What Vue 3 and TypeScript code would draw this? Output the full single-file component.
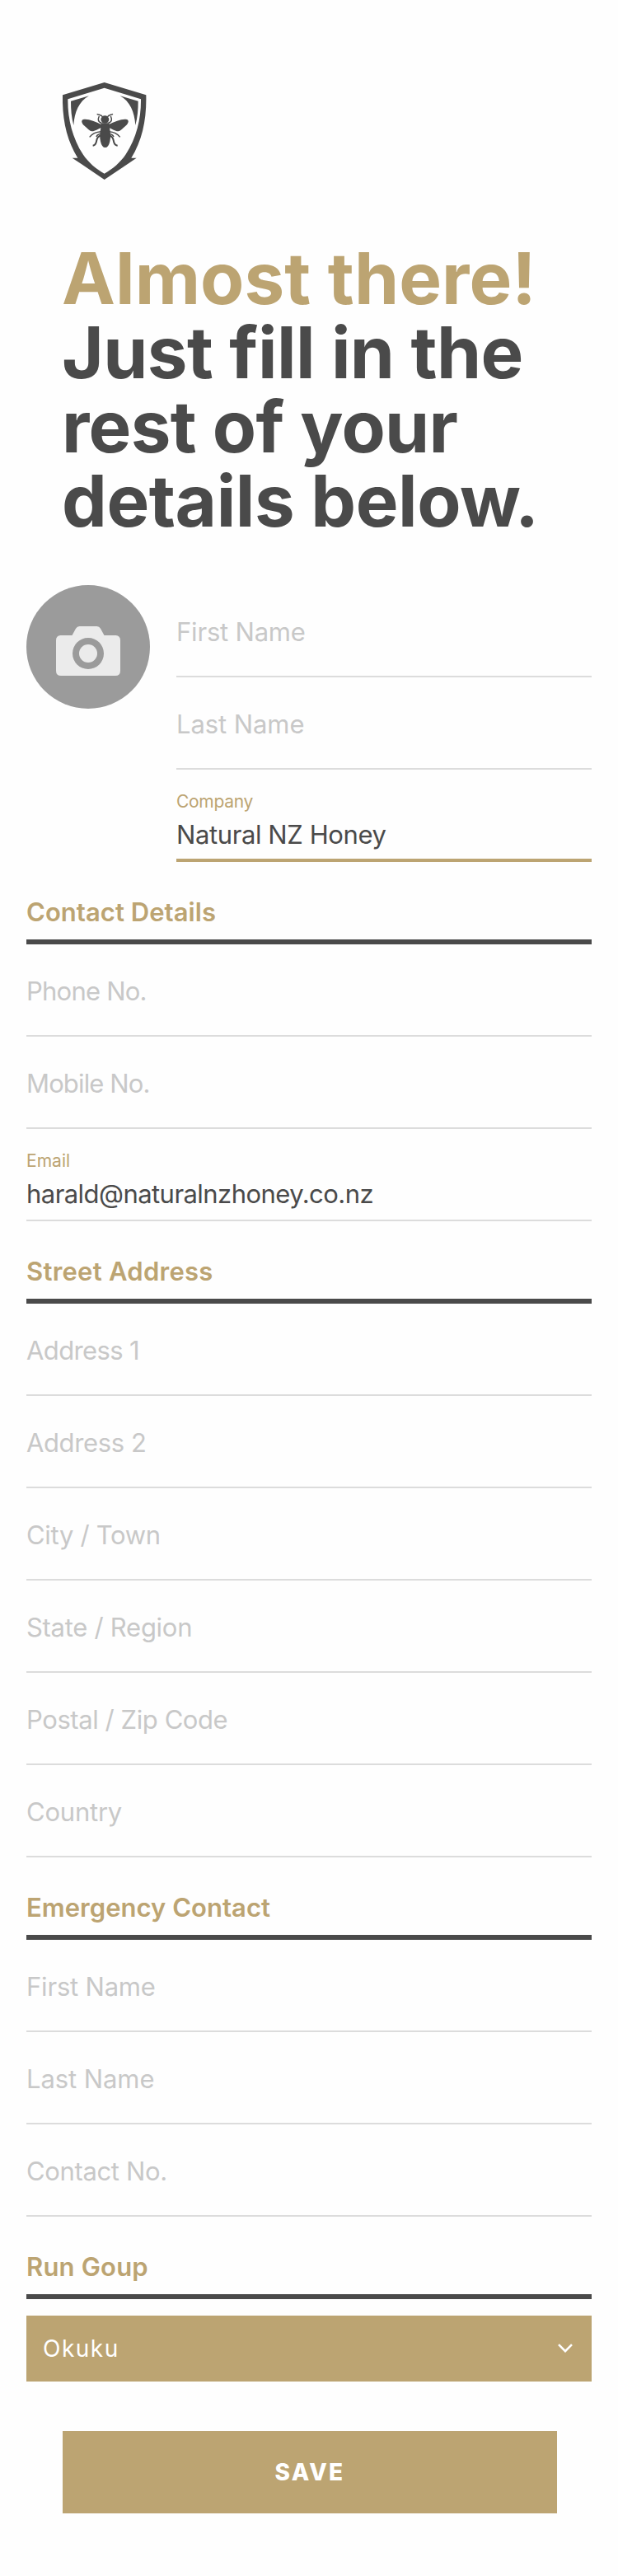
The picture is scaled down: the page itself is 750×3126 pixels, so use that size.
<script setup lang="ts">
interface Field {
  label: string
  tracking: number
  value?: string
  valueTracking?: number
  active?: boolean
}

interface Section {
  title: string
  tracking: number
  fields: Field[]
}

const headline = [
  { text: 'Almost there!', tracking: 0.05, accent: true },
  { text: 'Just fill in the', tracking: -0.6, accent: false },
  { text: 'rest of your', tracking: -0.7, accent: false },
  { text: 'details below.', tracking: -0.45, accent: false },
]

const profile: Field[] = [
  { label: 'First Name', tracking: -0.2 },
  { label: 'Last Name', tracking: -0.08 },
  { label: 'Company', tracking: -0.3, value: 'Natural NZ Honey', valueTracking: -0.4, active: true },
]

const sections: Section[] = [
  {
    title: 'Contact Details',
    tracking: 0.05,
    fields: [
      { label: 'Phone No.', tracking: -0.78 },
      { label: 'Mobile No.', tracking: -0.86 },
      { label: 'Email', tracking: 0.05, value: 'harald@naturalnzhoney.co.nz', valueTracking: -0.55 },
    ],
  },
  {
    title: 'Street Address',
    tracking: 0.26,
    fields: [
      { label: 'Address 1', tracking: -0.62 },
      { label: 'Address 2', tracking: -0.38 },
      { label: 'City / Town', tracking: -0.32 },
      { label: 'State / Region', tracking: -0.28 },
      { label: 'Postal / Zip Code', tracking: -0.42 },
      { label: 'Country', tracking: -0.22 },
    ],
  },
  {
    title: 'Emergency Contact',
    tracking: 0.03,
    fields: [
      { label: 'First Name', tracking: -0.2 },
      { label: 'Last Name', tracking: -0.08 },
      { label: 'Contact No.', tracking: -0.36 },
    ],
  },
  { title: 'Run Goup', tracking: 0.18, fields: [] },
]

const spacing = (px = 0) => ({ letterSpacing: `${px}px` })
</script>

<template>
  <main class="page">
    <header class="intro">
      <svg class="logo" viewBox="48 30 306 354" aria-hidden="true">
        <path
          class="ink"
          fill-rule="evenodd"
          d="M200 30 L352 76 C354 165 338 240 298 305 H317 L286 326 L200 384 L115 326 L83 305 H103 C63 240 46 165 48 76 Z
             M200 50 L67 91 C66 160 83 232 122 292 C142 322 170 346 200 362 C230 346 258 322 278 292 C318 232 334 160 333 91 Z"
        />
        <path class="ink" d="M78 98 L144 79 C108 99 91 137 88 186 C80 157 78 128 78 98 Z" />
        <path class="ink" d="M323 98 L257 79 C293 99 310 137 313 186 C321 157 323 128 323 98 Z" />
        <g class="line">
          <path d="M194 156 C190 149 182 149 173 145 M211 156 C215 149 223 149 231 145" />
          <path d="M190 178 C176 174 176 164 181 153 M214 178 C228 174 228 164 223 153" />
          <path d="M188 209 C172 210 156 216 146 229 M217 209 C233 210 247 216 257 229" />
          <path d="M190 217 C178 218 173 221 171 228" />
          <path d="M215 217 C227 218 231 221 234 228" />
        </g>
        <g class="leg">
          <path d="M186 224 C170 226 174 241 169 251 Q166 259 158 260" />
          <path d="M219 224 C235 226 231 241 236 251 Q239 259 248 260" />
        </g>
        <ellipse class="ink" cx="202" cy="165" rx="15" ry="14" />
        <path class="ink" d="M188 178 H217 Q220 187 219 196 C222 210 224 230 220 245 Q215 267 203 267 Q191 267 186 245 C182 230 184 210 187 196 Q186 187 188 178 Z" />
        <path class="ink" d="M190 184 C165 171 139 161 123 165 C113 169 119 180 126 187 C140 200 147 207 154 208 C165 209 175 199 190 195 Z" />
        <path class="ink" d="M215 184 C240 171 266 161 282 165 C292 169 286 180 279 187 C265 200 258 207 251 208 C240 209 230 199 215 195 Z" />
      </svg>
      <h1 class="headline">
        <span
          v-for="line in headline"
          :key="line.text"
          class="headline-line"
          :class="{ accent: line.accent }"
          :style="spacing(line.tracking)"
        >{{ line.text }}</span>
      </h1>
    </header>

    <section class="profile">
      <button class="avatar" type="button" aria-label="Add photo">
        <svg class="camera" viewBox="0 0 78 60" aria-hidden="true">
          <path
            fill-rule="evenodd"
            d="M5.5 11 H19.5 L24 2.8 Q25.6 0 28.5 0 H49.5 Q52.5 0 54 2.8 L58.500 11 H72.5 Q78 11.5 78 17 V54 Q78 60 72 60 H6 Q0 60 0 54 V17 Q0 11.5 5.5 11 Z
               M39 14 A19 19 0 1 0 39 52 A19 19 0 1 0 39 14 Z"
          />
          <circle cx="39" cy="33" r="11" />
        </svg>
      </button>
      <div class="fields">
        <div v-for="f in profile" :key="f.label" class="field" :class="{ filled: f.value, active: f.active }">
          <span class="label" :style="spacing(f.tracking)">{{ f.label }}</span>
          <span v-if="f.value" class="value" :style="spacing(f.valueTracking)">{{ f.value }}</span>
        </div>
      </div>
    </section>

    <section v-for="s in sections" :key="s.title" class="section">
      <h2 class="section-title" :style="spacing(s.tracking)">{{ s.title }}</h2>
      <div v-for="f in s.fields" :key="f.label" class="field" :class="{ filled: f.value }">
        <span class="label" :style="spacing(f.tracking)">{{ f.label }}</span>
        <span v-if="f.value" class="value" :style="spacing(f.valueTracking)">{{ f.value }}</span>
      </div>
    </section>

    <button class="select" type="button">
      <span>Okuku</span>
      <svg class="chevron" viewBox="0 0 18 11" aria-hidden="true">
        <path d="M1 1.2 L9 9.2 L17 1.2" />
      </svg>
    </button>

    <button class="save" type="button">SAVE</button>
  </main>
</template>

<style>
body {
  background: #fefefe;
}
</style>

<style scoped>
.page {
  display: flex;
  flex-direction: column;
  box-sizing: border-box;
  width: 750px;
  height: 3126px;
  padding: 100px 32px 0;
  background: #fefefe;
  color: #4a4a4a;
  font-family: Inter, "Liberation Sans", sans-serif;
}
.intro {
  height: 610px;
  padding-left: 43px;
}
.logo {
  display: block;
  width: 102px;
  height: 118px;
  margin-left: 1px;
}
.ink {
  fill: #4a4a4a;
}
.line {
  fill: none;
  stroke: #4a4a4a;
  stroke-width: 4.5;
}
.leg {
  fill: none;
  stroke: #4a4a4a;
  stroke-width: 6;
}
.headline {
  margin: 75px 0 0;
  font-size: 87px;
  line-height: 90px;
  font-weight: 700;
}
.headline-line {
  display: block;
  white-space: nowrap;
}
.accent {
  color: #bca472;
}
.profile {
  display: flex;
  gap: 32px;
}
.fields {
  flex: 1;
}
.avatar {
  display: flex;
  justify-content: center;
  box-sizing: border-box;
  width: 150px;
  height: 150px;
  padding: 50px 0 0;
  border: 0;
  border-radius: 50%;
  background: #9b9b9b;
}
.camera {
  width: 78px;
  height: 60px;
  fill: #ebebeb;
}
.field {
  box-sizing: border-box;
  height: 112px;
  padding-top: 37px;
  border-bottom: 2px solid #dcdcdc;
}
.label,
.value {
  display: block;
  font-size: 31px;
  line-height: 40px;
  white-space: nowrap;
}
.label {
  color: #c8c8c8;
}
.filled {
  padding-top: 27px;
}
.filled .label {
  color: #bca472;
  font-size: 21px;
  line-height: 24px;
}
.value {
  margin-top: 8px;
}
.active {
  border-bottom: 4px solid #bca472;
}
.section-title {
  box-sizing: border-box;
  height: 100px;
  margin: 0;
  padding-top: 41px;
  border-bottom: 6px solid #4a4a4a;
  color: #bca472;
  font-size: 31px;
  line-height: 40px;
  font-weight: 600;
}
.select {
  display: flex;
  align-items: center;
  justify-content: space-between;
  height: 80px;
  margin-top: 20px;
  padding: 0 23px 0 20px;
  border: 0;
  background: #bca472;
  color: #fff;
  font: 400 28px/40px Inter, "Liberation Sans", sans-serif;
  letter-spacing: 1.5px;
}
.chevron {
  width: 18px;
  height: 11px;
  margin-bottom: 1px;
  fill: none;
  stroke: #fff;
  stroke-width: 2.6;
}
.save {
  height: 100px;
  margin: 60px 42px 0 44px;
  padding: 0;
  border: 0;
  background: #bca472;
  color: #fff;
  font: 800 28px/40px Inter, "Liberation Sans", sans-serif;
  letter-spacing: 2.3px;
}
</style>
